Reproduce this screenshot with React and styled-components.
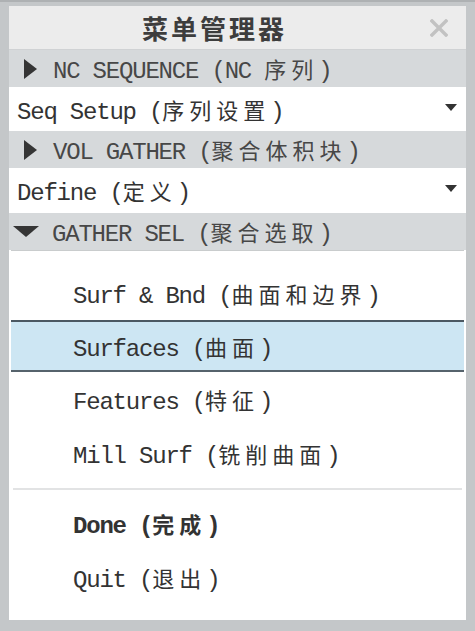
import React from "react";
import styled, { createGlobalStyle } from "styled-components";

const GlobalStyle = createGlobalStyle`
  html, body {
    margin: 0;
    padding: 0;
    background: #c4c7c9;
  }
`;

const Frame = styled.div`
  box-sizing: border-box;
  width: 475px;
  height: 631px;
  padding: 4px 9px 11px 9px;
  background: #c4c7c9;
  border-top: 2px solid #aeb1b3;
  display: flex;
`;

const Panel = styled.div`
  flex: 1;
  display: flex;
  flex-direction: column;
  background: #ffffff;
  font-family: "Liberation Mono", "Noto Sans CJK SC", monospace;
  font-size: 24px;
  letter-spacing: -1.2px;
  color: #3a3a3a;
`;

const TitleBar = styled.div`
  height: 43px;
  display: flex;
  align-items: center;
  background: #ececec;
  border-bottom: 1px solid #d0d2d4;
`;

const Title = styled.div`
  flex: 1;
  text-align: center;
  font-family: "Noto Sans CJK SC", sans-serif;
  font-weight: 700;
  font-size: 26px;
  letter-spacing: 3px;
  color: #3d3d3d;
  padding-left: 4px;
`;

const Close = styled.div`
  width: 46px;
  display: flex;
  justify-content: center;
  padding-right: 4px;
`;

const Header = styled.div`
  height: 37px;
  display: flex;
  align-items: center;
  background: #d6d9db;
  color: #474747;
  padding-left: ${(p) => (p.open ? "4px" : "15px")};
`;

const Arrow = styled.span`
  width: 0;
  height: 0;
  margin-right: ${(p) => (p.open ? "13px" : "16px")};
  ${(p) =>
    p.open
      ? `border-left: 13px solid transparent;
         border-right: 13px solid transparent;
         border-top: 11px solid #353535;`
      : `border-top: 10px solid transparent;
         border-bottom: 10px solid transparent;
         border-left: 13px solid #353535;`}
`;

const Option = styled.div`
  height: ${(p) => p.h}px;
  display: flex;
  align-items: center;
  justify-content: space-between;
  padding: 0 9px 0 8px;
  background: #ffffff;
  color: #333333;
`;

const Drop = styled.span`
  width: 0;
  height: 0;
  border-left: 6px solid transparent;
  border-right: 6px solid transparent;
  border-top: 7px solid #333333;
  margin-bottom: 4px;
`;

const List = styled.div`
  flex: 1;
  display: flex;
  flex-direction: column;
  margin: 0 2px;
  padding-top: 15px;
  background: #ffffff;
  border-top: 1px solid #c9cccd;
`;

const Item = styled.div`
  box-sizing: border-box;
  height: ${(p) => (p.selected ? 52 : 54)}px;
  display: flex;
  align-items: center;
  padding-left: 62px;
  color: #333333;
  font-weight: ${(p) => (p.bold ? 700 : 400)};
  background: ${(p) => (p.selected ? "#cde6f3" : "#ffffff")};
  border-top: ${(p) => (p.selected ? "2px solid #4b5862" : "none")};
  border-bottom: ${(p) => (p.selected ? "2px solid #56636c" : "none")};
`;

const Divider = styled.div`
  height: 2px;
  margin: 8px 2px 6px;
  background: #e2e3e4;
`;

const Cn = styled.span`
  font-family: "Noto Sans CJK SC", sans-serif;
  font-size: 22px;
  letter-spacing: 5px;
  font-weight: inherit;
`;

const Label = ({ en, cn }) => (
  <span>
    {en} (<Cn>{cn}</Cn>)
  </span>
);

export default function App() {
  return (
    <>
      <GlobalStyle />
      <Frame>
        <Panel>
          <TitleBar>
            <Title>菜单管理器</Title>
            <Close>
              <svg width="18" height="18" viewBox="0 0 18 18">
                <path
                  d="M2 2 L16 16 M16 2 L2 16"
                  stroke="#c2c2c2"
                  strokeWidth="3.4"
                  strokeLinecap="square"
                />
              </svg>
            </Close>
          </TitleBar>

          <Header>
            <Arrow />
            <span>
              NC SEQUENCE (NC <Cn>序列</Cn>)
            </span>
          </Header>
          <Option h={44}>
            <Label en="Seq Setup" cn="序列设置" />
            <Drop />
          </Option>

          <Header>
            <Arrow />
            <Label en="VOL GATHER" cn="聚合体积块" />
          </Header>
          <Option h={45}>
            <Label en="Define" cn="定义" />
            <Drop />
          </Option>

          <Header open>
            <Arrow open />
            <Label en="GATHER SEL" cn="聚合选取" />
          </Header>

          <List>
            <Item>
              <Label en="Surf & Bnd" cn="曲面和边界" />
            </Item>
            <Item selected>
              <Label en="Surfaces" cn="曲面" />
            </Item>
            <Item>
              <Label en="Features" cn="特征" />
            </Item>
            <Item>
              <Label en="Mill Surf" cn="铣削曲面" />
            </Item>
            <Divider />
            <Item bold>
              <Label en="Done" cn="完成" />
            </Item>
            <Item>
              <Label en="Quit" cn="退出" />
            </Item>
          </List>
        </Panel>
      </Frame>
    </>
  );
}
